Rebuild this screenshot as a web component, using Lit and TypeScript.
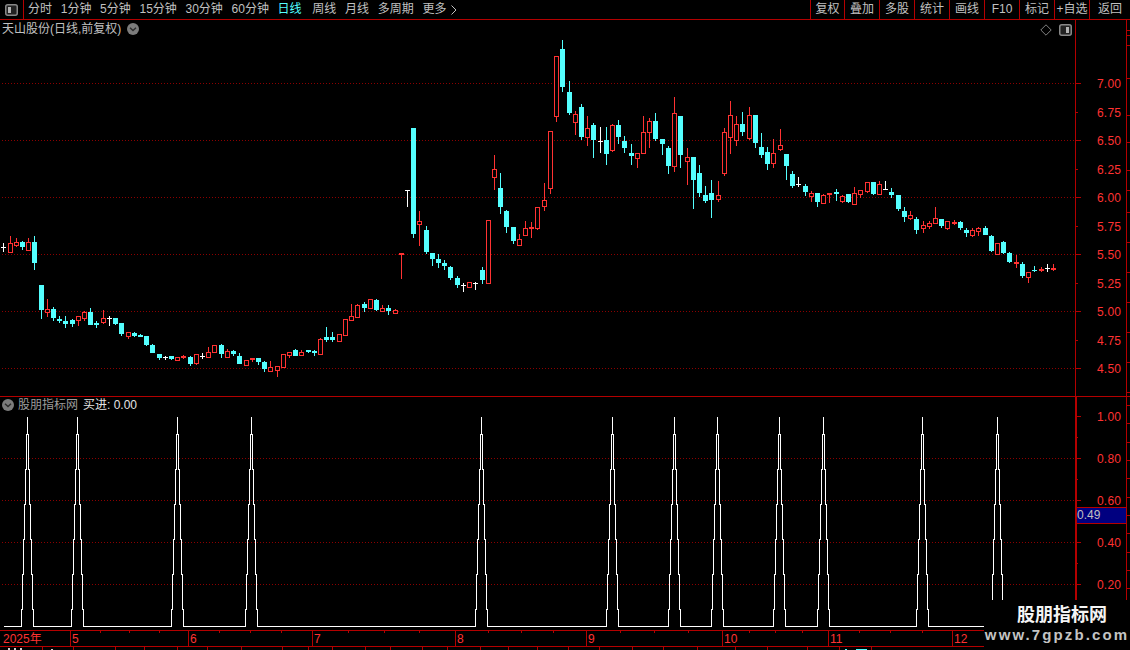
import { LitElement, html, css, svg } from "lit";
import { customElement } from "lit/decorators.js";

const CYAN = "#54ffff";
const RED = "#ff3232";
const WHITE = "#ffffff";
const LINE = "#b40000";

// kind: c = filled cyan, r = hollow red, f = filled red, w = white cross
type Candle = [string, number, number, number, number];
const CANDLES: Candle[] = [
  ["w",243,247,247,252],["r",236,243,252,252],["r",238,242,245,247],["c",241,242,247,250],["r",238,242,250,250],
  ["c",236,242,263,270],["c",285,285,310,319],["r",299,309,312,317],["c",307,309,318,321],["c",316,319,321,323],
  ["c",316,321,324,328],["c",319,320,324,327],["r",316,316,320,326],["r",311,312,318,321],["c",308,312,325,325],
  ["c",321,323,325,328],["r",310,318,322,324],["w",316,318,318,326],["c",318,318,324,325],["c",323,323,334,336],
  ["r",332,332,336,339],["c",332,333,336,337],["c",334,335,337,337],["c",336,336,345,346],["c",344,345,353,353],
  ["c",354,354,358,360],["w",356,357,357,360],["c",356,356,359,360],["r",357,357,360,360],["f",355,356,358,359],
  ["c",356,357,364,366],["r",354,354,363,365],["w",353,356,356,359],["r",347,352,357,357],["r",345,345,352,353],
  ["c",344,345,354,358],["r",349,351,357,357],["c",350,351,354,356],["c",353,356,364,364],["r",360,360,365,365],
  ["f",358,358,360,362],["c",358,358,362,365],["c",361,362,369,372],["r",361,367,371,372],["r",366,366,370,377],
  ["r",354,354,367,367],["r",352,352,355,358],["c",349,350,356,356],["r",350,352,355,356],["c",350,350,352,353],
  ["c",350,351,353,356],["r",338,339,354,354],["c",327,337,340,342],["c",332,337,340,342],["r",334,334,341,342],
  ["r",319,319,335,336],["r",304,316,320,321],["r",304,305,317,317],["c",302,304,308,312],["r",299,299,308,308],
  ["c",299,300,310,311],["r",305,308,311,311],["c",305,308,311,315],["r",309,310,313,313],["f",253,253,255,279],
  ["w",190,190,190,207],["c",128,128,234,238],["r",211,221,224,246],["c",226,230,252,254],["c",253,253,259,266],
  ["c",254,259,263,268],["c",260,263,266,270],["c",266,267,278,280],["c",276,278,285,288],["w",283,285,285,292],
  ["r",282,282,287,287],["w",282,283,283,290],["c",267,270,280,284],["r",220,220,283,283],["r",155,169,177,190],
  ["c",173,188,207,214],["c",210,211,227,233],["c",227,227,241,244],["r",234,239,245,245],["r",221,228,235,235],
  ["f",222,227,229,238],["r",207,207,228,230],["r",183,200,206,211],["r",131,131,188,194],["r",56,56,116,122],
  ["c",40,49,87,92],["c",81,92,113,115],["r",111,114,122,135],["c",104,107,137,140],["r",116,128,137,146],
  ["c",123,125,140,158],["w",127,141,141,153],["c",127,140,154,165],["r",124,125,150,152],["c",120,125,137,144],
  ["c",136,141,148,153],["c",144,153,156,165],["r",153,153,158,168],["r",116,132,153,153],["r",118,121,132,148],
  ["c",113,121,139,141],["c",139,139,144,155],["c",146,148,166,174],["r",97,113,166,172],["c",116,116,155,168],
  ["r",148,157,161,185],["c",157,157,180,209],["c",165,173,193,197],["c",186,195,201,203],["c",180,193,200,218],
  ["r",181,195,199,202],["r",128,132,173,176],["r",101,115,137,154],["r",116,124,140,146],["c",112,124,132,136],
  ["r",107,115,138,140],["c",115,115,143,148],["c",133,147,155,158],["c",147,152,164,170],["r",139,153,163,168],
  ["r",129,145,149,151],["c",154,154,166,180],["c",171,174,186,188],["w",177,184,184,187],["c",184,186,192,196],
  ["r",191,193,196,202],["c",193,193,202,207],["r",194,195,203,204],["f",193,193,195,203],["c",189,192,194,201],
  ["r",195,196,201,203],["c",194,194,202,203],["r",187,193,204,204],["r",190,190,194,198],["r",182,182,191,193],
  ["c",182,182,194,195],["r",181,184,194,194],["w",181,189,189,190],["c",188,192,195,198],["c",195,195,209,211],
  ["c",207,211,217,222],["r",211,215,218,220],["c",217,219,230,234],["r",221,225,228,233],["r",221,223,226,229],
  ["r",207,218,223,223],["c",219,219,226,228],["r",221,221,228,230],["f",220,222,224,225],["c",221,222,228,230],
  ["c",228,230,233,237],["r",228,230,235,237],["r",227,228,231,236],["c",226,228,235,235],["c",235,236,251,252],
  ["r",243,243,254,254],["c",241,242,253,254],["c",252,253,262,263],["f",255,262,264,268],["c",262,264,276,278],
  ["r",272,272,277,283],["c",266,270,271,272],["f",267,269,271,272],["w",264,268,268,272],["f",264,268,270,271],
];

const PEAKS = [27, 77, 177, 251, 481, 612, 674, 717, 779, 823, 922, 997];
const STEPS = [609, 574, 539, 504, 469, 434];

function spikePath(): string {
  let d = "M3.5 626.5";
  for (const p of PEAKS) {
    for (let k = 0; k < STEPS.length; k++) {
      d += ` H${p - 6 + k + 0.5} V${STEPS[k] + 0.5}`;
    }
    d += ` H${p + 0.5} V416.5 V434.5`;
    for (let k = STEPS.length - 1; k >= 0; k--) {
      d += ` H${p + 6 - k + 0.5} V${(k === 0 ? 626 : STEPS[k - 1]) + 0.5}`;
    }
  }
  return d + " H1040";
}

const chevronCircle = html`<svg class="badge" width="12" height="12" viewBox="0 0 12 12">
  <circle cx="6" cy="6" r="6" fill="#7c7c7c"></circle>
  <path d="M3 4.8 L6 7.6 L9 4.8" fill="none" stroke="#2c2c2c" stroke-width="1.4"></path>
</svg>`;

const panelIcon = (side: "left" | "right") => html`<svg width="13" height="12" viewBox="0 0 13 12">
  <rect x="0.75" y="0.75" width="11.5" height="10.5" rx="2" fill="#222" stroke="#888" stroke-width="1.5"></rect>
  <rect x="${side === "left" ? 3 : 7}" y="3" width="3" height="6" fill="#b4b4b4"></rect>
</svg>`;

const dotted = (ys: number[]) =>
  ys.map(
    (y) => svg`<line x1="2" x2="1075" y1=${y + 0.5} y2=${y + 0.5} stroke="#8c0000" stroke-dasharray="1 2" shape-rendering="auto"></line>`
  );

function axis(
  y0: number,
  h: number,
  labels: [string, number, number][],
  minors: number[],
  edge: number[],
  spineWidth: number
) {
  return html`<svg class="axis" width="55" height=${h} viewBox="1075 ${y0} 55 ${h}" shape-rendering="crispEdges">
    <line x1=${1075 + spineWidth / 2} x2=${1075 + spineWidth / 2} y1=${y0} y2=${y0 + h} stroke=${LINE} stroke-width=${spineWidth}></line>
    <line x1="1126.5" x2="1126.5" y1=${y0} y2=${y0 + h} stroke=${LINE}></line>
    ${labels.map(
      ([t, y, len]) => svg`<line x1="1076" x2=${1076 + len} y1=${y + 0.5} y2=${y + 0.5} stroke=${LINE}></line>
        <text class="tick" x="1097" y=${y + 5}>${t}</text>`
    )}
    ${minors.map((y) => svg`<line x1="1076" x2="1078" y1=${y + 0.5} y2=${y + 0.5} stroke=${LINE}></line>`)}
    ${edge.map((y) => svg`<line x1="1127" x2="1130" y1=${y + 0.5} y2=${y + 0.5} stroke=${LINE}></line>`)}
  </svg>`;
}

@customElement("app-root")
export class AppRoot extends LitElement {
  static styles = css`
    :host {
      display: block;
      width: 1130px;
      height: 650px;
      background: #000;
      overflow: hidden;
      font-family: "Liberation Sans", "Noto Sans CJK SC", sans-serif;
      font-size: 12px;
      color: #c0c0c0;
    }
    .app {
      position: relative;
      display: flex;
      flex-direction: column;
      width: 1130px;
      height: 650px;
      background: #000;
    }
    .toolbar {
      display: flex;
      height: 19px;
      border-bottom: 1px solid #b40000;
      line-height: 19px;
      white-space: nowrap;
    }
    .menu-btn {
      width: 23px;
      border-right: 1px solid #b40000;
      display: flex;
      align-items: center;
      justify-content: center;
    }
    .tabs {
      flex: 1;
      display: flex;
      gap: 8.7px;
      padding-left: 4px;
    }
    .tab.active {
      color: #54ffff;
    }
    .tab.wide {
      margin-left: 2px;
    }
    .more {
      display: flex;
      align-items: center;
      gap: 5px;
    }
    .cmds {
      display: flex;
    }
    .cmd {
      width: 34px;
      border-left: 1px solid #b40000;
      text-align: center;
    }
    .cmd.first {
      width: 33px;
    }
    .cmd.last {
      width: 40px;
    }
    .pane {
      display: flex;
    }
    .pane.main {
      height: 376px;
    }
    .pane.sub {
      height: 233px;
    }
    .divider {
      height: 1px;
      background: #b40000;
    }
    .plot {
      position: relative;
      width: 1075px;
    }
    .plot svg.canvas {
      display: block;
    }
    .axis {
      display: block;
    }
    .tick {
      font-family: "Liberation Sans", sans-serif;
      font-size: 12px;
      letter-spacing: 0.2px;
      fill: #ff3232;
    }
    .title {
      position: absolute;
      left: 2px;
      top: 1px;
      display: flex;
      align-items: center;
      gap: 6px;
      line-height: 16px;
      color: #c0c0c0;
    }
    .sub-title {
      position: absolute;
      left: 2px;
      top: 0;
      display: flex;
      align-items: center;
      gap: 4px;
      line-height: 16px;
      color: #9c9c9c;
    }
    .sub-title b {
      font-weight: normal;
      color: #e4e4e4;
      margin-left: 1px;
    }
    .badge {
      display: block;
      flex: none;
    }
    .tools {
      position: absolute;
      right: 3px;
      top: 4px;
      display: flex;
      align-items: center;
      gap: 7px;
    }
    .price-tag {
      position: absolute;
      left: 1077px;
      top: 110px;
      width: 49px;
      height: 15px;
      border-top: 1px solid #b40000;
      border-bottom: 1px solid #b40000;
      background: #000080;
      color: #c0c0c0;
      line-height: 15px;
      font-size: 12px;
    }
    .sub-wrap {
      position: relative;
    }
    .dates {
      display: block;
    }
    .mark {
      font-family: "Liberation Sans", "Noto Sans CJK SC", sans-serif;
      font-size: 12px;
      fill: #ff3232;
    }
    .watermark {
      position: absolute;
      right: 0;
      bottom: 0;
      width: 146px;
      height: 50px;
      background: #000;
      display: flex;
      flex-direction: column;
      align-items: center;
      box-sizing: border-box;
    }
    .wm-name {
      margin-top: 1px;
      padding-left: 10px;
      font-family: "Noto Sans CJK SC", sans-serif;
      font-weight: 700;
      font-size: 18px;
      line-height: 24px;
      color: #f4f4f4;
    }
    .wm-url {
      margin-top: 1px;
      font-family: "Liberation Sans", sans-serif;
      font-weight: 700;
      font-size: 15px;
      line-height: 18px;
      letter-spacing: 2.1px;
      color: #c4c4c4;
      white-space: nowrap;
    }
  `;

  render() {
    const tabs = ["分时", "1分钟", "5分钟", "15分钟", "30分钟", "60分钟"];
    const cmds = ["复权", "叠加", "多股", "统计", "画线", "F10", "标记", "+自选"];
    const xOf = (i: number) => Math.round(3.3 + i * 6.211);

    const candles = CANDLES.map(([k, hi, top, bot, lo], i) => {
      const x = xOf(i);
      const color = k === "c" ? CYAN : k === "w" ? WHITE : RED;
      if (k === "w") {
        return svg`<rect x=${x} y=${hi} width="1" height=${lo - hi} fill=${color}></rect>
          <rect x=${x - 2} y=${top} width="5" height="1" fill=${color}></rect>`;
      }
      if (k === "r") {
        return svg`<rect x=${x} y=${hi} width="1" height=${top - hi} fill=${color}></rect>
          <rect x=${x} y=${bot} width="1" height=${lo - bot} fill=${color}></rect>
          <rect x=${x - 1.5} y=${top + 0.5} width="4" height=${bot - top} fill="#000" stroke=${color}></rect>`;
      }
      return svg`<rect x=${x} y=${hi} width="1" height=${lo - hi} fill=${color}></rect>
        <rect x=${x - 2} y=${top} width="5" height=${Math.max(bot - top, 1)} fill=${color}></rect>`;
    });

    const upper: [string, number, number][] = [
      ["7.00", 83, 5], ["6.75", 112, 2], ["6.50", 140, 5], ["6.25", 169, 2], ["6.00", 197, 5], ["5.75", 226, 2],
      ["5.50", 254, 5], ["5.25", 283, 2], ["5.00", 311, 5], ["4.75", 340, 2], ["4.50", 368, 5],
    ];
    const upperEdge = [30, 35, 45, 78, 115, 142, 170, 190, 212, 242, 272, 302, 332, 362, 392];
    const lower: [string, number, number][] = [
      ["1.00", 416, 5], ["0.80", 458, 5], ["0.60", 500, 5], ["0.40", 542, 5], ["0.20", 584, 5],
    ];
    const lowerMinor = [437, 479, 521, 563, 605];
    const lowerEdge = [405, 423, 442, 460, 478, 497, 515, 533, 552, 570, 588, 607, 625];

    const months: [string, number][] = [
      ["5", 70], ["6", 188], ["7", 312], ["8", 455], ["9", 586], ["10", 722], ["11", 828], ["12", 952],
    ];
    const minorDates = [100, 129, 159, 219, 250, 281, 348, 384, 419, 488, 521, 553, 620, 654, 688, 749, 775, 802, 859, 890, 922];
    const statusTicks = [42, 73, 115, 144, 177, 207, 241, 282, 308, 332, 365, 390, 422, 447, 480, 508, 537, 568, 599, 632, 663, 697, 735, 767, 807, 839, 871];

    return html`<div class="app">
      <div class="toolbar">
        <div class="menu-btn">${panelIcon("left")}</div>
        <div class="tabs">
          ${tabs.map((t) => html`<span class="tab">${t}</span>`)}
          <span class="tab active">日线</span>
          <span class="tab wide">周线</span>
          <span class="tab">月线</span>
          <span class="tab">多周期</span>
          <span class="tab more">更多
            <svg width="6" height="10" viewBox="0 0 6 10"><path d="M0.5 0.5 L5 5 L0.5 9.5" fill="none" stroke="#c0c0c0"></path></svg>
          </span>
        </div>
        <div class="cmds">
          ${cmds.map((c, i) => html`<div class="cmd ${i === 0 ? "first" : ""}">${c}</div>`)}
          <div class="cmd last">返回</div>
        </div>
      </div>

      <div class="pane main">
        <div class="plot">
          <svg class="canvas" width="1075" height="376" viewBox="0 20 1075 376" shape-rendering="crispEdges">
            ${dotted([83, 140, 197, 254, 311, 368])}
            ${candles}
          </svg>
          <div class="title"><span>天山股份(日线,前复权)</span>${chevronCircle}</div>
          <div class="tools">
            <svg width="12" height="12" viewBox="0 0 12 12"><path d="M6 .8 L11.2 6 L6 11.2 L.8 6 Z" fill="none" stroke="#808080"></path></svg>
            ${panelIcon("right")}
          </div>
        </div>
        ${axis(20, 376, upper, [], upperEdge, 1)}
      </div>

      <div class="divider"></div>

      <div class="pane sub sub-wrap">
        <div class="plot">
          <svg class="canvas" width="1075" height="233" viewBox="0 397 1075 233" shape-rendering="crispEdges">
            ${dotted([458, 500, 542, 584])}
            <path d=${spikePath()} fill="none" stroke="#fff"></path>
          </svg>
          <div class="sub-title">${chevronCircle}<span>股朋指标网</span><b>买进: 0.00</b></div>
        </div>
        ${axis(397, 233, lower, lowerMinor, lowerEdge, 2)}
        <div class="price-tag">0.49</div>
      </div>

      <svg class="dates" width="1130" height="20" viewBox="0 630 1130 20" shape-rendering="crispEdges">
        <line x1="0" x2="1130" y1="630.5" y2="630.5" stroke=${LINE}></line>
        <line x1="0" x2="1130" y1="646.5" y2="646.5" stroke=${LINE}></line>
        <text class="mark" x="3" y="643">2025年</text>
        ${months.map(
          ([t, x]) => svg`<line x1=${x + 0.5} x2=${x + 0.5} y1="631" y2="646" stroke=${LINE}></line>
            <text class="mark" x=${x + 2} y="643">${t}</text>`
        )}
        ${minorDates.map((x) => svg`<line x1=${x + 0.5} x2=${x + 0.5} y1="631" y2="633" stroke=${LINE}></line>`)}
        ${statusTicks.map((x) => svg`<line x1=${x + 0.5} x2=${x + 0.5} y1="647" y2="650" stroke=${LINE}></line>`)}
        <rect x="8" y="648" width="2" height="2" fill="#d0d0d0"></rect>
        <rect x="14" y="648" width="2" height="2" fill="#d0d0d0"></rect>
        <rect x="20" y="648" width="2" height="2" fill="#d0d0d0"></rect>
        <rect x="51" y="649" width="2" height="1" fill="#d0d0d0"></rect>
        <rect x="845" y="649" width="2" height="1" fill=${CYAN}></rect>
        <rect x="856" y="649" width="11" height="1" fill=${CYAN}></rect>
      </svg>

      <div class="watermark">
        <div class="wm-name">股朋指标网</div>
        <div class="wm-url">www.7gpzb.com</div>
      </div>
    </div>`;
  }
}
